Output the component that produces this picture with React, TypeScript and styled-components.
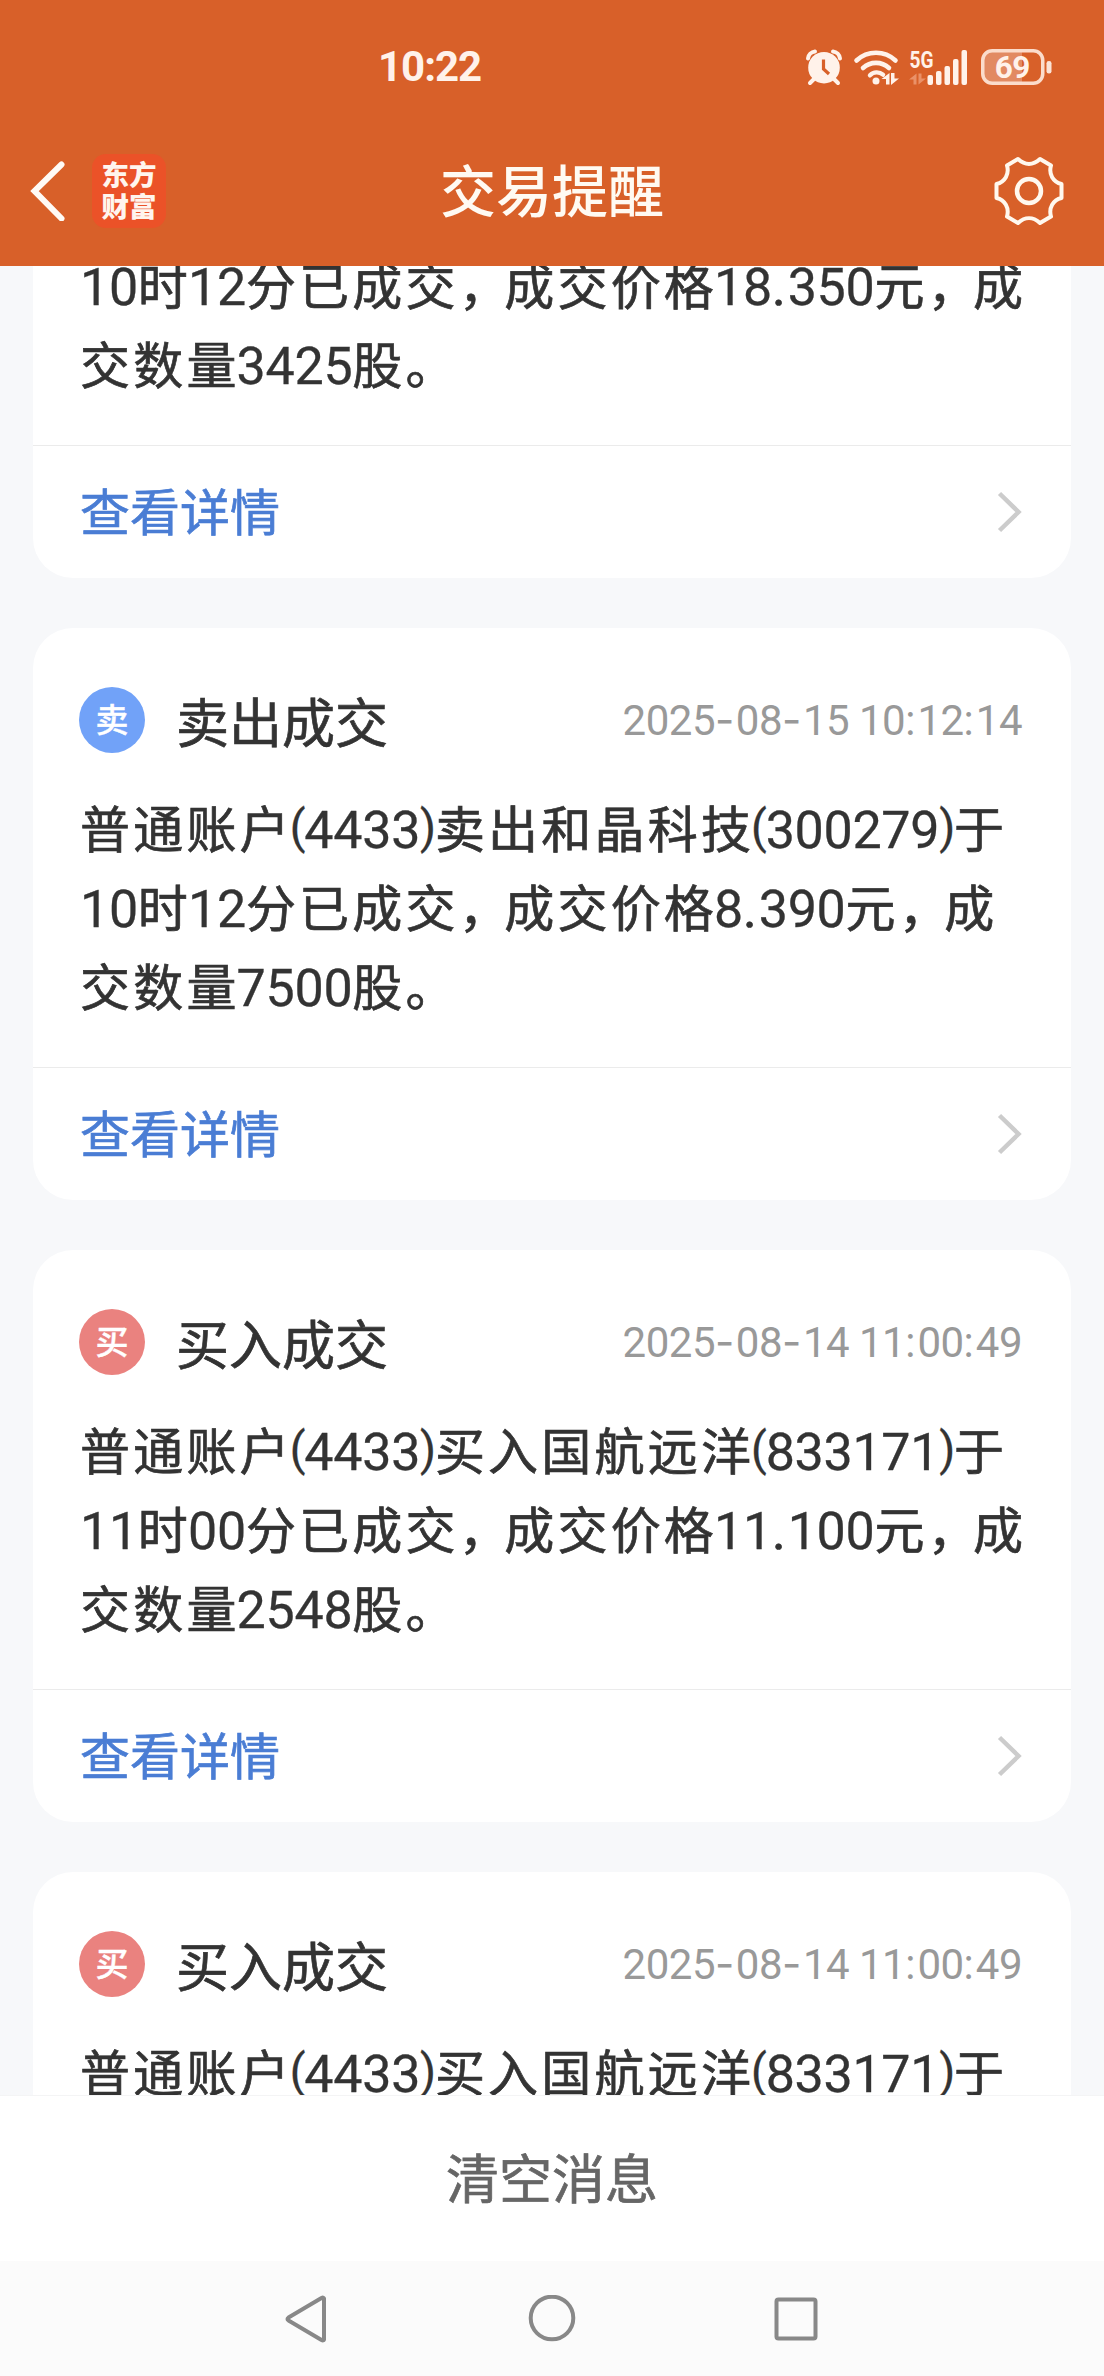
import React from "react";
import styled, { createGlobalStyle } from "styled-components";

const CJK = `"Noto Sans CJK SC", sans-serif`;
const LATIN = `Roboto, "Noto Sans CJK SC", sans-serif`;

const GlobalStyle = createGlobalStyle`
  * { box-sizing: border-box; }
  body { margin: 0; background: #f7f8fa; font-family: ${CJK}; }
`;

const Screen = styled.div`
  width: 1104px;
  height: 2376px;
  display: flex;
  flex-direction: column;
  overflow: hidden;
  background: #f7f8fa;
`;

/* ---------- header ---------- */

const Header = styled.header`
  flex: none;
  height: 266px;
  background: #d86029;
  display: flex;
  flex-direction: column;
`;

const StatusBar = styled.div`
  height: 116px;
  padding: 18px 52px 0 378px;
  display: flex;
  align-items: center;
  justify-content: space-between;
`;

const Clock = styled.span`
  font: 700 42px/50px ${LATIN};
  letter-spacing: -1px;
  color: #fff2ea;
`;

const StatusIcons = styled.div`
  display: flex;
  align-items: center;
  svg { display: block; overflow: visible; }
`;

const AlarmSlot = styled.div`margin-right: 12px;`;
const WifiSlot = styled.div`margin-right: 9px;`;
const SignalSlot = styled.div`margin-right: 13px;`;

const TitleBar = styled.div`
  height: 150px;
  padding: 0 40px 0 30px;
  display: grid;
  grid-template-columns: 1fr auto 1fr;
  align-items: center;
  padding-bottom: 1px;
`;

const TitleLeft = styled.div`
  display: flex;
  align-items: center;
  gap: 26px;
  svg { display: block; }
`;

const Logo = styled.div`
  width: 74px;
  height: 74px;
  border-radius: 14px;
  background: #eb5228;
  color: #fff5ee;
  display: flex;
  flex-direction: column;
  align-items: center;
  justify-content: center;
  font: 900 27.5px/32px ${CJK};
  padding-bottom: 3px;
`;

const PageTitle = styled.h1`
  margin: 0 0 0 10px;
  font: 500 56px/80px ${CJK};
  color: #fffaf2;
  padding-bottom: 5px;
`;

const TitleRight = styled.div`
  display: flex;
  justify-content: flex-end;
  svg { display: block; }
`;

/* ---------- message list ---------- */

const List = styled.main`
  flex: none;
  height: 1829px;
  padding: 0 33px;
  overflow: hidden;
  display: flex;
  flex-direction: column;
  gap: 50px;
`;

const Card = styled.article<{ $scrolled?: boolean }>`
  flex: none;
  background: #fff;
  border-radius: ${(p) => (p.$scrolled ? "0 0 40px 40px" : "40px")};
  margin-top: ${(p) => (p.$scrolled ? "-22px" : "0")};
`;

const CardHead = styled.div`
  height: 159px;
  padding: 59px 49px 34px 46px;
  display: flex;
  align-items: center;
`;

const Badge = styled.span<{ $side: "sell" | "buy" }>`
  width: 66px;
  height: 66px;
  border-radius: 50%;
  background: ${(p) => (p.$side === "sell" ? "#71a2f8" : "#ea827f")};
  color: #fff;
  font: 500 33px/62px ${CJK};
  text-align: center;
  -webkit-text-stroke: 0.4px #fff;
`;

const CardTitle = styled.h2`
  margin: 0 auto 0 31px;
  font: 400 53px/66px ${CJK};
  color: #333;
  -webkit-text-stroke: 0.7px #333;
`;

const Time = styled.time`
  font: 400 42px/66px ${LATIN};
  letter-spacing: -0.5px;
  color: #999;
  white-space: pre;
`;

const Dash = styled.span`
  font-family: Inter, sans-serif;
  letter-spacing: 1.5px;
`;

const Colon = styled.span`
  letter-spacing: 2px;
`;

const CardBody = styled.div`
  padding: 0 0 43px 47px;
  color: #333;
  font: 400 50px/79px ${CJK};
`;

const Line = styled.div`
  height: 79px;
  white-space: nowrap;
  letter-spacing: 3.2px;
  -webkit-text-stroke: 0.7px #333;
`;

const Digits = styled.span<{ $afterHan: boolean }>`
  font: 400 52px/1 ${LATIN};
  letter-spacing: -0.3px;
  margin-left: ${(p) => (p.$afterHan ? "-3px" : "0")};
  -webkit-text-stroke: 0.3px #333;
`;

const Paren = styled.span<{ $open: boolean }>`
  font: 400 46px/1 ${LATIN};
  letter-spacing: -1.2px;
  vertical-align: 5px;
  margin-left: ${(p) => (p.$open ? "-3px" : "0")};
  -webkit-text-stroke: 0.3px #333;
`;

const Point = styled.span`
  font: 400 52px/1 ${LATIN};
  letter-spacing: 2px;
`;

const Comma = styled.span`
  letter-spacing: -4.5px;
`;

const CardFoot = styled.a`
  height: 133px;
  border-top: 1px solid #ebebeb;
  padding: 0 49px 0 47px;
  display: flex;
  align-items: center;
  justify-content: space-between;
  font: 400 50px/74px ${CJK};
  color: #4a7dd4;
  -webkit-text-stroke: 0.7px #4a7dd4;
  span { padding-bottom: 7px; }
  svg { display: block; }
`;

/* ---------- bottom ---------- */

const ClearBar = styled.button`
  flex: none;
  height: 166px;
  border: 0;
  border-top: 1px solid #f4f4f5;
  padding: 0 0 6px;
  background: #fff;
  color: #666;
  font: 400 53px/80px ${CJK};
  -webkit-text-stroke: 0.7px #666;
`;

const NavBar = styled.nav`
  flex: 1;
  background: #fbfbfb;
  display: flex;
  align-items: center;
  justify-content: center;
  gap: 196px;
  svg { display: block; }
`;

/* ---------- text helpers ---------- */

const RichLine = ({ text }: { text: string }) => (
  <Line>
    {(text.match(/\d+|[()]|\.|\uFF0C|[^\d().\uFF0C]+/g) || []).map((run, i, all) => {
      if (/^\d/.test(run)) {
        return <Digits key={i} $afterHan={i > 0 && !/[().]/.test(all[i - 1])}>{run}</Digits>;
      }
      if (/^[()]/.test(run)) return <Paren key={i} $open={run === "("}>{run}</Paren>;
      if (run === ".") return <Point key={i}>{run}</Point>;
      if (run === "\uFF0C") return <Comma key={i}>{run}</Comma>;
      return <React.Fragment key={i}>{run}</React.Fragment>;
    })}
  </Line>
);

const Stamp = ({ value }: { value: string }) => (
  <Time>
    {value.split(/([-:])/).map((part, i) =>
      part === "-" ? <Dash key={i}>-</Dash> : part === ":" ? <Colon key={i}>:</Colon> : part
    )}
  </Time>
);

/* ---------- icons ---------- */

const ICON = "#fff2ea";

const AlarmIcon = () => (
  <svg width="36" height="36" viewBox="0 0 36 36" fill="none">
    <path d="M2 9.5A8 8 0 0 1 9 2.5M34 9.5A8 8 0 0 0 27 2.5" stroke={ICON} strokeWidth="4" strokeLinecap="round" />
    <path d="M8 30l-4 4M28 30l4 4" stroke={ICON} strokeWidth="4" strokeLinecap="round" />
    <circle cx="18" cy="18.7" r="15.8" fill={ICON} />
    <path d="M17.5 10.5v9.5l5.5 5" stroke="#d86029" strokeWidth="3.2" />
  </svg>
);

const WifiIcon = () => (
  <svg width="46" height="36" viewBox="0 0 46 36" fill="none">
    <path d="M2.5 11.5a28.5 28.5 0 0 1 39 0" stroke={ICON} strokeWidth="4.6" strokeLinecap="round" />
    <path d="M9 19a19 19 0 0 1 26 0" stroke={ICON} strokeWidth="4.6" strokeLinecap="round" />
    <path d="M16 26.3a9.500 9.500 0 0 1 13-.6" stroke={ICON} strokeWidth="4.4" strokeLinecap="round" />
    <circle cx="22" cy="32" r="3.5" fill={ICON} />
    <path d="M35.5 24v11.500h-3.500v-5.500h-4.500zM37 24h3.500v5.500h4.500l-8 6.500z" fill={ICON} />
  </svg>
);

const SignalIcon = () => (
  <svg width="59" height="36" viewBox="0 0 59 36">
    <text x="0.500" y="18.500" fontFamily="Roboto, sans-serif" fontWeight="700" fontSize="24.500" textLength="24" lengthAdjust="spacingAndGlyphs" fill={ICON}>5G</text>
    <path d="M7.500 24.500v11h-3v-5h-4.500zM9.500 24.500h3v5h4.500l-7.500 6z" fill="#ea9168" />
    <g fill={ICON}>
      <rect x="18.500" y="26" width="5.500" height="10" rx="2" />
      <rect x="27" y="22" width="5.500" height="14" rx="2" />
      <rect x="35.500" y="17" width="5.500" height="19" rx="2" />
      <rect x="44" y="10" width="5.500" height="26" rx="2" />
      <rect x="52.500" y="1" width="5.500" height="35" rx="2" />
    </g>
  </svg>
);

const BatteryIcon = () => (
  <svg width="71" height="36" viewBox="0 0 71 36">
    <path d="M11 2h30v32H11a9 9 0 0 1-9-9V11a9 9 0 0 1 9-9z" fill="#e28a62" />
    <rect x="1.750" y="1.750" width="60" height="32.500" rx="9.500" fill="none" stroke="#fbdccb" strokeWidth="3.500" />
    <rect x="65.500" y="12" width="5" height="12.500" rx="2.300" fill="#fbe3d6" />
    <text x="31.500" y="29.200" textAnchor="middle" fontFamily="Roboto, sans-serif" fontWeight="700" fontSize="31.500" textLength="35.500" fill={ICON}>69</text>
  </svg>
);

const BackIcon = () => (
  <svg width="36" height="60" viewBox="0 0 36 60" fill="none">
    <path d="M31.500 3.500L4.500 30l27 27.500" stroke="#fffaf5" strokeWidth="6" strokeLinecap="round" strokeLinejoin="miter" />
  </svg>
);

const GearIcon = () => (
  <svg width="70" height="70" viewBox="0 0 70 70" fill="none" stroke="#fff8ee" strokeWidth="4" strokeLinejoin="round">
    <path d="M24 3C31 9.500 39 9.500 46 3L57 9.500C54.500 18 59 26 67.500 28V42C59 44 54.500 52 57 60.500L46 67C39 60.500 31 60.500 24 67L13 60.500C15.500 52 11 44 2.500 42V28C11 26 15.500 18 13 9.500Z" />
    <circle cx="35" cy="35" r="12" strokeWidth="4.500" />
  </svg>
);

const ChevronIcon = () => (
  <svg width="25" height="42" viewBox="0 0 25 42" fill="none">
    <path d="M2.500 2.500L21.500 21l-19 18.500" stroke="#ccc" strokeWidth="4.500" />
  </svg>
);

const NavBack = () => (
  <svg width="48" height="48" viewBox="0 0 48 48" fill="none">
    <path d="M40 3.500V44.500Q39.500 46 37.500 45L4.500 25.500Q2.500 24 4.500 22.500L37.500 3Q39.500 2 40 3.500Z" stroke="#888" strokeWidth="4" strokeLinejoin="round" />
  </svg>
);

const NavHome = () => (
  <svg width="48" height="48" viewBox="0 0 48 48" fill="none">
    <circle cx="24" cy="23" r="21.300" stroke="#888" strokeWidth="4" />
  </svg>
);

const NavRecent = () => (
  <svg width="48" height="48" viewBox="0 0 48 48" fill="none">
    <rect x="4.500" y="4.500" width="39" height="39" rx="2" stroke="#888" strokeWidth="4" />
  </svg>
);

/* ---------- data ---------- */

type Message = { side: "sell" | "buy"; time: string; lines: string[] };

const messages: Message[] = [
  {
    side: "sell",
    time: "2025-08-15 10:12:14",
    lines: ["普通账户(4433)卖出和晶科技(300279)于", "10时12分已成交\uFF0C成交价格8.390元\uFF0C成", "交数量7500股。"],
  },
  {
    side: "buy",
    time: "2025-08-14 11:00:49",
    lines: ["普通账户(4433)买入国航远洋(833171)于", "11时00分已成交\uFF0C成交价格11.100元\uFF0C成", "交数量2548股。"],
  },
  {
    side: "buy",
    time: "2025-08-14 11:00:49",
    lines: ["普通账户(4433)买入国航远洋(833171)于"],
  },
];

const Footer = () => (
  <CardFoot>
    <span>查看详情</span>
    <ChevronIcon />
  </CardFoot>
);

export default function App() {
  return (
    <>
      <GlobalStyle />
      <Screen>
        <Header>
          <StatusBar>
            <Clock>10:22</Clock>
            <StatusIcons>
              <AlarmSlot><AlarmIcon /></AlarmSlot>
              <WifiSlot><WifiIcon /></WifiSlot>
              <SignalSlot><SignalIcon /></SignalSlot>
              <BatteryIcon />
            </StatusIcons>
          </StatusBar>
          <TitleBar>
            <TitleLeft>
              <BackIcon />
              <Logo>
                <span>东方</span>
                <span>财富</span>
              </Logo>
            </TitleLeft>
            <PageTitle>交易提醒</PageTitle>
            <TitleRight><GearIcon /></TitleRight>
          </TitleBar>
        </Header>
        <List>
          <Card $scrolled>
            <CardBody>
              <RichLine text={"10时12分已成交\uFF0C成交价格18.350元\uFF0C成"} />
              <RichLine text="交数量3425股。" />
            </CardBody>
            <Footer />
          </Card>
          {messages.map((m, i) => (
            <Card key={i}>
              <CardHead>
                <Badge $side={m.side}>{m.side === "sell" ? "卖" : "买"}</Badge>
                <CardTitle>{m.side === "sell" ? "卖出成交" : "买入成交"}</CardTitle>
                <Stamp value={m.time} />
              </CardHead>
              <CardBody>
                {m.lines.map((l, j) => (
                  <RichLine key={j} text={l} />
                ))}
              </CardBody>
              {m.lines.length > 1 && <Footer />}
            </Card>
          ))}
        </List>
        <ClearBar>清空消息</ClearBar>
        <NavBar>
          <NavBack />
          <NavHome />
          <NavRecent />
        </NavBar>
      </Screen>
    </>
  );
}
